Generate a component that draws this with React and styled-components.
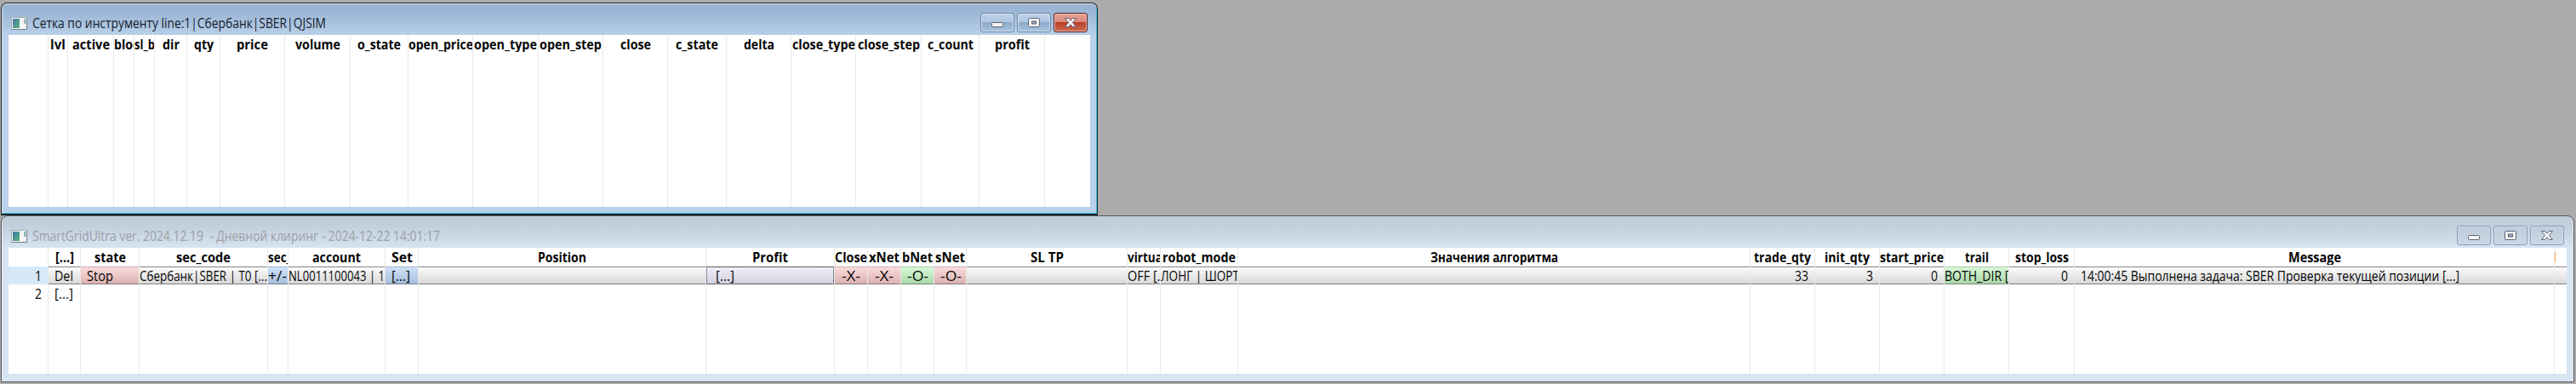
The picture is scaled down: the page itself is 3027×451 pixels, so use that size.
import React, { useLayoutEffect, useRef, useState } from "react";
import styled, { createGlobalStyle } from "styled-components";

const GlobalStyle = createGlobalStyle`
  * { box-sizing: border-box; }
  html, body, #root { height: 100%; }
  body {
    margin: 0;
    overflow: hidden;
    background: #ababab;
    font-family: "Open Sans", "Noto Sans", sans-serif;
    font-size: 15.5px;
    color: #060606;
  }
`;

const Desktop = styled.main`
  height: 451px;
  padding: 3px 0 0 1px;
  display: flex;
  flex-direction: column;
  align-items: flex-start;
  overflow: hidden;
`;

const Window = styled.section`
  flex: none;
  display: flex;
  flex-direction: column;
  width: ${(p) => p.$width}px;
  height: ${(p) => p.$height}px;
  padding: 0 8px;
  border: 1px solid ${(p) => (p.$active ? "#1c2227" : "#55585c")};
  border-bottom-width: ${(p) => (p.$active ? 2 : 1)}px;
  border-radius: ${(p) => (p.$active ? "7px 7px 0 0" : "8px 8px 0 0")};
  background: ${(p) =>
    p.$active
      ? "linear-gradient(#98b3d1 0, #9db8d6 12px, #b9d1ea 38px)"
      : "linear-gradient(#bfccd8 0, #c2cfdc 12px, #d7e4f2 38px)"};
  box-shadow: ${(p) =>
    p.$active
      ? "inset 0 1px #dfe8f1, inset 1px 0 #d5e3f2, inset -1px -1px #35c3da"
      : "inset 0 1px #c9d0da, inset 1px 0 #e4ecf5, inset -1px 0 #e4ecf5"};
`;

const TitleBar = styled.header`
  flex: none;
  height: ${(p) => p.$height}px;
  display: flex;
  align-items: flex-start;
  padding: 11px 3px 0 3px;
  color: ${(p) => (p.$active ? "#16202c" : "#9c9fa4")};
`;

const Caption = styled.h1`
  margin: 0 auto 0 6px;
  padding-top: 3px;
  font-size: 15.5px;
  font-weight: 400;
`;

const AppIcon = styled.svg`
  width: 19px;
  height: 15px;
  margin-top: 5px;
`;

const Buttons = styled.div`
  display: flex;
  gap: ${(p) => p.$gap}px;
`;

const skins = {
  normal: ["#6b84a3", "linear-gradient(#bfd3e9 0, #adc5e0 48%, #8eabca 50%, #a9c3e0 100%)", "#d2e1f1"],
  danger: ["#5c1d22", "linear-gradient(#e5a496 0, #d88778 46%, #b83f25 50%, #cc6d55 100%)", "#eeb7aa"],
  muted: ["#8f9dba", "linear-gradient(#bfccda, #cad7e5)", "#ccd8e6"],
};

const FrameButton = styled.button`
  width: 40px;
  height: 23px;
  padding: 0;
  display: flex;
  align-items: center;
  justify-content: center;
  border: 1px solid ${(p) => skins[p.$skin][0]};
  border-radius: 3px;
  background: ${(p) => skins[p.$skin][1]};
  box-shadow: inset 0 0 0 1px ${(p) => skins[p.$skin][2]};
`;

const Sheet = styled.div`
  flex: none;
  height: ${(p) => p.$height}px;
  display: flex;
  background: #fff;
  overflow: hidden;
`;

const Column = styled.div`
  flex: none;
  width: ${(p) => p.$width}px;
  display: flex;
  flex-direction: column;
  border-right: 1px solid #e9e9e9;
  overflow: hidden;

  &:last-child { border-right: 0; }
`;

const tones = {
  none: ["transparent", "transparent", "transparent"],
  label: ["#d6e9f9", "#d6e9f9", "#d6e9f9"],
  grey: ["linear-gradient(#fbfbfb, #d9d9d9)", "#858585", "#7f7f7f"],
  pink: ["linear-gradient(#fadcdc, #dcb1b1)", "#c9b2b2", "#857474"],
  blue: ["linear-gradient(#cfe2f9, #a5bedb)", "#a3b3c6", "#6f7f92"],
  green: ["linear-gradient(#d8f8d8, #abd9ab)", "#afc9af", "#728872"],
  lilac: ["linear-gradient(#efeffb, #d2d2e0)", "#858585", "#7f7f7f"],
};

const Cell = styled.div`
  flex: none;
  height: 21px;
  display: flex;
  align-items: center;
  justify-content: ${(p) => p.$align};
  padding: 1px ${(p) => p.$right}px 0 ${(p) => p.$left}px;
  border-top: 1px solid ${(p) => tones[p.$tone][1]};
  border-bottom: 1px solid ${(p) => tones[p.$tone][2]};
  background: ${(p) => tones[p.$tone][0]};
  font-weight: ${(p) => (p.$bold ? 700 : 400)};
  outline: ${(p) => (p.$focused ? "1px dotted #333" : "none")};
  outline-offset: -1px;
  overflow: hidden;
`;

const HeaderCell = styled(Cell)`
  margin-bottom: 1px;
  background: ${(p) =>
    p.$clipMark ? "linear-gradient(#fbb055, #fbb055) 0 4px / 1px 12px no-repeat" : "none"};
`;

const Slot = styled.span`
  flex: none;
  display: block;
  width: ${(p) => p.$width}px;
  line-height: 19px;
`;

const Run = styled.span`
  display: inline-block;
  white-space: pre;
  transform-origin: 0 50%;
`;

function Text({ width, children }) {
  const ref = useRef(null);
  const [scale, setScale] = useState(1);
  useLayoutEffect(() => {
    setScale(width / ref.current.getBoundingClientRect().width);
  }, []);
  return (
    <Slot $width={width}>
      <Run ref={ref} style={{ transform: `scaleX(${scale})` }}>{children}</Run>
    </Slot>
  );
}

function WindowIcon() {
  return (
    <AppIcon viewBox="0 0 19 15">
      <rect x="0.5" y="0.5" width="18" height="14" fill="#f2f5f4" stroke="#a2a9ad" />
      <path d="M18.5 1V14.5H1" fill="none" stroke="#777c80" />
      <defs>
        <linearGradient id="pane" x1="0" y1="0" x2="1" y2="1">
          <stop offset="0" stopColor="#4076a8" />
          <stop offset="1" stopColor="#5bb87a" />
        </linearGradient>
      </defs>
      <rect x="2" y="2" width="8" height="11" fill="url(#pane)" />
      <rect x="15.5" y="2" width="1.5" height="6" fill="#5d9c9c" />
    </AppIcon>
  );
}

const MinimizeGlyph = () => (
  <svg width="16" height="14" viewBox="0 0 16 14">
    <rect x="1.5" y="6.5" width="13" height="5" rx="1" fill="#f2f2f2" stroke="#5f6675" />
  </svg>
);

const MaximizeGlyph = () => (
  <svg width="16" height="14" viewBox="0 0 16 14">
    <rect x="1.5" y="1.5" width="13" height="10" rx="1" fill="#f2f2f2" stroke="#5f6675" />
    <rect x="5.5" y="5" width="5" height="3" fill="#93a9c4" stroke="#5f6675" />
  </svg>
);

const CloseGlyph = () => (
  <svg width="16" height="14" viewBox="0 0 16 14">
    <path
      d="M1.5 1.5H5.6L8 4.2L10.4 1.5H14.5L10.4 6.5L14.5 11.5H10.4L8 8.8L5.6 11.5H1.5L5.6 6.5Z"
      fill="#f4f4f4"
      stroke="#5f6675"
      strokeLinejoin="round"
    />
  </svg>
);

/* Column: right edge, heading, heading width, options. */
const gridColumns = [
  [57, "", 0],
  [80, "lvl", 18],
  [134, "active", 44],
  [158, "block", 38, { start: true }],
  [182, "sl_bl", 28, { start: true }],
  [220, "dir", 20],
  [259, "qty", 23],
  [335, "price", 37],
  [412, "volume", 53],
  [480, "o_state", 51],
  [556, "open_price", 76],
  [633, "open_type", 74],
  [709, "open_step", 73],
  [785, "close", 36],
  [854, "c_state", 50],
  [930, "delta", 36],
  [1006, "close_type", 74],
  [1083, "close_step", 73],
  [1151, "c_count", 54],
  [1228, "profit", 41],
  [1280, "", 0],
];

const cell = (text, width, tone = "grey", rest = {}) => ({ text, width, tone, ...rest });

const robotColumns = [
  [57, "", 0, { rows: [cell("1", 8, "label", { right: 7 }), cell("2", 8, "none", { right: 7 })] }],
  [95, "[...]", 22, { rows: [cell("Del", 22, "grey", { left: 7 }), cell("[...]", 22, "none", { left: 7 })] }],
  [164, "state", 37, { rows: [cell("Stop", 31, "pink", { left: 7 })] }],
  [315, "sec_code", 64, { rows: [cell("Сбербанк|SBER | T0 [...", 150, "grey", { left: 0 })] }],
  [339, "sec_type", 57, { start: true, rows: [cell("+/-", 22, "blue", { left: 0 })] }],
  [453, "account", 57, { rows: [cell("NL0011100043 | 1", 113, "grey", { left: 0 })] }],
  [492, "Set", 25, { rows: [cell("[...]", 22, "blue", { left: 7 })] }],
  [830, "Position", 57, { rows: [cell("", 0)] }],
  [981, "Profit", 42, { rows: [cell("[...]", 22, "lilac", { left: 11, focused: true })] }],
  [1020, "Close", 38, { rows: [cell("-X-", 22, "pink", { left: 8 })] }],
  [1059, "xNet", 36, { rows: [cell("-X-", 22, "pink", { left: 8 })] }],
  [1098, "bNet", 36, { rows: [cell("-O-", 25, "green", { left: 7 })] }],
  [1136, "sNet", 35, { rows: [cell("-O-", 25, "pink", { left: 7 })] }],
  [1325, "SL TP", 39, { rows: [cell("", 0)] }],
  [1364, "virtual", 45, { start: true, rows: [cell("OFF [...", 46, "grey", { left: 0 })] }],
  [1455, "robot_mode", 86, { rows: [cell("ЛОНГ | ШОРТ", 92, "grey", { left: 0 })] }],
  [2057, "Значения алгоритма", 150, { rows: [cell("", 0)] }],
  [2133, "trade_qty", 67, { rows: [cell("33", 16, "grey", { right: 7 })] }],
  [2209, "init_qty", 53, { rows: [cell("3", 8, "grey", { right: 7 })] }],
  [2285, "start_price", 75, { rows: [cell("0", 8, "grey", { right: 7 })] }],
  [2361, "trail", 28, { rows: [cell("BOTH_DIR [...]", 91, "green", { left: 0 })] }],
  [2438, "stop_loss", 63, { rows: [cell("0", 8, "grey", { right: 7 })] }],
  [3002, "Message", 62, { rows: [cell("14:00:45 Выполнена задача: SBER Проверка текущей позиции [...]", 445, "grey", { left: 7 })] }],
  [3016, "", 0, { clipMark: true, rows: [cell("", 0)] }],
];

function DataSheet({ columns, height }) {
  return (
    <Sheet $height={height}>
      {columns.map(([edge, title, width, { start, clipMark, rows = [] } = {}], i) => (
        <Column key={edge} $width={edge - (i ? columns[i - 1][0] : 10)}>
          <HeaderCell $bold $tone="none" $align={start ? "flex-start" : "center"} $left={0} $right={0} $clipMark={clipMark}>
            {title && <Text width={width}>{title}</Text>}
          </HeaderCell>
          {rows.map((r, n) => (
            <Cell
              key={n}
              $tone={r.tone}
              $align={r.right !== undefined ? "flex-end" : "flex-start"}
              $left={r.left || 0}
              $right={r.right || 0}
              $focused={r.focused}
            >
              {r.text && <Text width={r.width}>{r.text}</Text>}
            </Cell>
          ))}
        </Column>
      ))}
    </Sheet>
  );
}

function ToolWindow({ active, width, height, titleHeight, sheetHeight, caption, captionWidth, gap, columns }) {
  const skin = active ? "normal" : "muted";
  return (
    <Window $active={active} $width={width} $height={height}>
      <TitleBar $active={active} $height={titleHeight}>
        <WindowIcon />
        <Caption><Text width={captionWidth}>{caption}</Text></Caption>
        <Buttons $gap={gap}>
          <FrameButton $skin={skin} aria-label="Свернуть"><MinimizeGlyph /></FrameButton>
          <FrameButton $skin={skin} aria-label="Развернуть"><MaximizeGlyph /></FrameButton>
          <FrameButton $skin={active ? "danger" : skin} aria-label="Закрыть"><CloseGlyph /></FrameButton>
        </Buttons>
      </TitleBar>
      <DataSheet columns={columns} height={sheetHeight} />
    </Window>
  );
}

export default function App() {
  return (
    <>
      <GlobalStyle />
      <Desktop>
        <ToolWindow
          active
          width={1289}
          height={250}
          titleHeight={37}
          sheetHeight={202}
          caption="Сетка по инструменту line:1|Сбербанк|SBER|QJSIM"
          captionWidth={345}
          gap={3}
          columns={gridColumns}
        />
        <ToolWindow
          width={3024}
          height={196}
          titleHeight={37}
          sheetHeight={148}
          caption="SmartGridUltra ver. 2024.12.19  - Дневной клиринг - 2024-12-22 14:01:17"
          captionWidth={479}
          gap={3}
          columns={robotColumns}
        />
      </Desktop>
    </>
  );
}
